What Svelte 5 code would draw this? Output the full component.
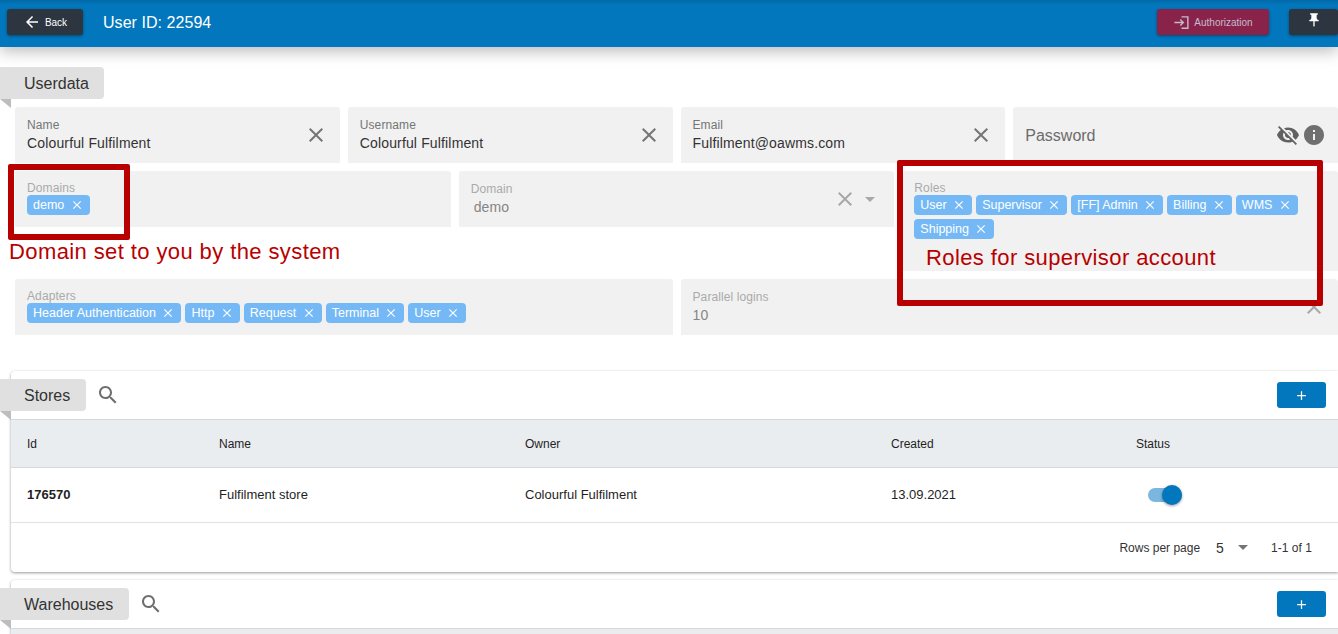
<script>
  const close = 'M19 6.41L17.59 5 12 10.59 6.41 5 5 6.41 10.59 12 5 17.59 6.41 19 12 13.41 17.59 19 19 17.59 13.41 12z';
  const search = 'M15.5 14h-.79l-.28-.27C15.41 12.59 16 11.11 16 9.5 16 5.91 13.09 3 9.5 3S3 5.91 3 9.5 5.91 16 9.5 16c1.61 0 3.09-.59 4.23-1.57l.27.28v.79l5 4.99L20.49 19l-4.99-5zm-6 0C7.01 14 5 11.99 5 9.5S7.01 5 9.5 5 14 7.01 14 9.5 11.99 14 9.5 14z';
  const add = 'M19 13h-6v6h-2v-6H5v-2h6V5h2v6h6v2z';
  const topFields = [
    { label: 'Name', value: 'Colourful Fulfilment' },
    { label: 'Username', value: 'Colourful Fulfilment' },
    { label: 'Email', value: 'Fulfilment@oawms.com' }
  ];
  const roles = ['User', 'Supervisor', '[FF] Admin', 'Billing', 'WMS', 'Shipping'];
  const adapters = ['Header Authentication', 'Http', 'Request', 'Terminal', 'User'];
</script>

{#snippet icon(d, cls)}
  <svg class={cls} viewBox="0 0 24 24" aria-hidden="true"><path d={d} /></svg>
{/snippet}

{#snippet tag(text)}
  <div class="tag">{text}<span class="fold"></span></div>
{/snippet}

{#snippet chips(items)}
  <div class="chips">
    {#each items as c}
      <span class="chip">{c}{@render icon(close, 'chip-x')}</span>
    {/each}
  </div>
{/snippet}

<div class="page">
  <header class="bar">
    <button class="btn dark back">
      {@render icon('M20 11H7.83l5.59-5.59L12 4l-8 8 8 8 1.41-1.41L7.83 13H20v-2z', 'back-ico')}
      Back
    </button>
    <h1>User ID: 22594</h1>
    <span class="spacer"></span>
    <button class="btn auth">
      {@render icon('M11 7L9.6 8.4l2.6 2.6H2v2h10.2l-2.6 2.6L11 17l5-5-5-5zm9 12h-8v2h8V5h-8V3h10v18h-2z', 'auth-ico')}
      Authorization
    </button>
    <button class="btn dark pin">
      {@render icon('M16 9V4h1c.55 0 1-.45 1-1s-.45-1-1-1H7c-.55 0-1 .45-1 1s.45 1 1 1h1v5c0 1.66-1.34 3-3 3v2h5.97v7l1 1 1-1v-7H19v-2c-1.66 0-3-1.34-3-3z', 'pin-ico')}
    </button>
  </header>

  <section class="userdata">
    {@render tag('Userdata')}
    <div class="rows">
      <div class="row">
        {#each topFields as f}
          <div class="field">
            <div class="text">
              <span class="label">{f.label}</span>
              <span class="value">{f.value}</span>
            </div>
            {@render icon(close, 'clear')}
          </div>
        {/each}
        <div class="field">
          <span class="placeholder">Password</span>
          <div class="pw-icons">
            {@render icon('M12 7c2.76 0 5 2.24 5 5 0 .65-.13 1.26-.36 1.83l2.92 2.92c1.51-1.26 2.7-2.89 3.43-4.75-1.73-4.39-6-7.5-11-7.5-1.4 0-2.74.25-3.98.7l2.16 2.16C10.74 7.13 11.35 7 12 7zM2 4.27l2.28 2.28.46.46C3.08 8.3 1.78 10.02 1 12c1.73 4.39 6 7.5 11 7.5 1.55 0 3.03-.3 4.38-.84l.42.42L19.73 22 21 20.73 3.27 3 2 4.27zM7.53 9.8l1.55 1.55c-.05.21-.08.43-.08.65 0 1.66 1.34 3 3 3 .22 0 .44-.03.65-.08l1.55 1.55c-.67.33-1.41.53-2.2.53-2.76 0-5-2.24-5-5 0-.79.2-1.53.53-2.2zm4.31-.78l3.15 3.15.02-.16c0-1.66-1.34-3-3-3l-.17.01z', 'eye')}
            {@render icon('M12 2C6.48 2 2 6.48 2 12s4.48 10 10 10 10-4.48 10-10S17.52 2 12 2zm1 15h-2v-6h2v6zm0-8h-2V7h2v2z', 'info')}
          </div>
        </div>
      </div>

      <div class="row top">
        <div class="field multi">
          <span class="label dim">Domains</span>
          {@render chips(['demo'])}
        </div>
        <div class="field">
          <div class="text">
            <span class="label dim">Domain</span>
            <span class="value dim-value">demo</span>
          </div>
          {@render icon(close, 'clear light')}
          <span class="caret domain-caret"></span>
        </div>
        <div class="field multi roles">
          <span class="label dim">Roles</span>
          {@render chips(roles)}
        </div>
      </div>

      <div class="row adapters-row">
        <div class="field multi">
          <span class="label dim">Adapters</span>
          {@render chips(adapters)}
        </div>
        <div class="field">
          <div class="text">
            <span class="label dim">Parallel logins</span>
            <span class="value dim-value flush">10</span>
          </div>
          {@render icon(close, 'clear light')}
        </div>
      </div>
    </div>
  </section>

  <section class="card stores">
    <div class="toolbar">
      {@render tag('Stores')}
      {@render icon(search, 'search')}
      <span class="spacer"></span>
      <button class="plus">{@render icon(add, 'plus-ico')}</button>
    </div>
    <div class="thead grid">
      <span>Id</span><span>Name</span><span>Owner</span><span>Created</span><span>Status</span>
    </div>
    <div class="tbody grid">
      <strong>176570</strong>
      <span>Fulfilment store</span>
      <span>Colourful Fulfilment</span>
      <span>13.09.2021</span>
      <span class="switch"><i></i><b></b></span>
    </div>
    <div class="pager">
      <span>Rows per page</span>
      <span class="per">5</span>
      <span class="caret dark-caret"></span>
      <span class="count">1-1 of 1</span>
    </div>
  </section>

  <section class="card warehouses">
    <div class="toolbar">
      {@render tag('Warehouses')}
      {@render icon(search, 'search')}
      <span class="spacer"></span>
      <button class="plus">{@render icon(add, 'plus-ico')}</button>
    </div>
    <div class="thead"></div>
  </section>

  <div class="note box-a"></div>
  <div class="note box-b"></div>
  <div class="note text-a">Domain set to you by the system</div>
  <div class="note text-b">Roles for supervisor account</div>
</div>

<style>
  :global(body) { margin: 0; background: #fff; }
  .page {
    position: relative;
    width: 1338px;
    height: 634px;
    overflow: hidden;
    background: #fff;
    color: #212121;
    font-family: "Liberation Sans", Arial, sans-serif;
    font-size: 13px;
  }
  svg { display: block; fill: currentColor; flex: none; }
  .spacer { flex: 1; }

  .bar {
    height: 47px;
    box-sizing: border-box;
    display: flex;
    align-items: center;
    padding: 0 0 3px 7px;
    background: linear-gradient(#0269a6 0, #0277bd 5px);
    box-shadow: 0 4px 16px rgba(0, 0, 0, .28);
    color: #fff;
    position: relative;
  }
  .bar h1 { margin: 1px 0 0 20px; font-size: 16px; font-weight: 400; letter-spacing: .05px; }
  .btn {
    height: 26px;
    border: 0;
    border-radius: 3px;
    display: flex;
    align-items: center;
    justify-content: center;
    color: #fff;
    font: 400 10px "Liberation Sans", Arial, sans-serif;
    box-shadow: 0 1px 3px rgba(0, 0, 0, .4);
    padding: 0;
  }
  .dark { background: #2d3640; }
  .back { width: 76px; gap: 4px; }
  .back-ico { width: 18px; height: 18px; }
  .auth { width: 112px; gap: 4px; background: #8a2349; color: #c3bcd0; margin-right: 20px; }
  .auth-ico { width: 17px; height: 17px; }
  .pin { width: 49px; }
  .pin-ico { width: 16px; height: 16px; transform: translateY(-2px); }

  .userdata { margin-top: 20px; }
  .tag {
    position: relative;
    width: fit-content;
    height: 32px;
    box-sizing: border-box;
    padding: 1px 15.5px 0 24px;
    display: flex;
    align-items: center;
    background: #e0e0e0;
    border-radius: 0 4px 4px 0;
    color: #333;
    font-size: 16px;
    white-space: nowrap;
  }
  .fold {
    position: absolute;
    left: 0;
    top: 32px;
    width: 0;
    height: 0;
    border-top: 9px solid #bdbdbd;
    border-left: 11px solid transparent;
  }
  .rows { display: flex; flex-direction: column; gap: 8px; margin: 8px 0 0 15px; }
  .row { display: flex; gap: 8px; }
  .row.top { align-items: flex-start; }
  .field {
    flex: 1 1 0;
    min-width: 0;
    height: 56px;
    box-sizing: border-box;
    background: #f1f1f1;
    border-radius: 3px 3px 0 0;
    padding: 0 12px;
    display: flex;
    align-items: center;
    position: relative;
  }
  .text { flex: 1; display: flex; flex-direction: column; }
  .label { display: block; font-size: 12px; line-height: 14px; color: #757575; letter-spacing: .1px; }
  .label.dim { color: #aaa; }
  .value { font-size: 14px; line-height: 20px; margin-top: 1px; color: #333; letter-spacing: .15px; }
  .dim-value { color: #858585; padding-left: 3px; }
  .flush { padding-left: 0; }
  .clear { width: 24px; height: 24px; color: #757575; }
  .clear.light { color: #a8a8a8; }
  .placeholder { flex: 1; font-size: 16px; color: #6b6b6b; padding-top: 1px; }
  .pw-icons { display: flex; align-items: center; gap: 2px; }
  .eye { width: 24px; height: 24px; color: #616161; }
  .info { width: 24px; height: 24px; color: #6f6f6f; }
  .multi { display: block; padding-top: 11px; }
  .multi .label { line-height: 13px; }
  .roles { height: 100px; }
  .chips { display: flex; flex-wrap: wrap; gap: 4px; }
  .chip {
    height: 20px;
    box-sizing: border-box;
    padding: 0 6px;
    display: inline-flex;
    align-items: center;
    gap: 5.4px;
    background: #74b9f5;
    border-radius: 4px;
    color: #fff;
    font-size: 12.5px;
    white-space: nowrap;
  }
  .chip-x { width: 14px; height: 14px; }
  .caret {
    width: 0;
    height: 0;
    border-left: 5px solid transparent;
    border-right: 5px solid transparent;
    border-top: 5px solid #a8a8a8;
    margin-left: 8px;
  }
  .domain-caret { margin-right: 7px; }

  .card {
    margin-left: 11px;
    background: #fff;
    border-radius: 4px 0 0 4px;
    box-shadow: 0 1px 3px rgba(0, 0, 0, .4);
  }
  .stores { margin-top: 36px; }
  .warehouses { margin-top: 8px; }
  .toolbar {
    height: 48px;
    box-sizing: border-box;
    display: flex;
    align-items: center;
    padding: 0 12px 0 0;
    margin-left: -11px;
  }
  .search { width: 24px; height: 24px; color: #6e6e6e; margin-left: 10px; }
  .plus {
    width: 49px;
    height: 26px;
    border: 0;
    border-radius: 3px;
    background: #0277bd;
    color: #fff;
    padding: 0;
    display: flex;
    align-items: center;
    justify-content: center;
  }
  .plus-ico { width: 15px; height: 15px; }
  .grid {
    display: grid;
    grid-template-columns: 192px 306px 366px 245px 1fr;
    padding-left: 16px;
    align-items: center;
    font-size: 13px;
    color: #1f1f1f;
  }
  .thead {
    height: 49px;
    box-sizing: border-box;
    background: #eaedf0;
    border-top: 1px solid #d6d8db;
    border-bottom: 1px solid #d6d8db;
    font-size: 12px;
  }
  .tbody { height: 55px; box-sizing: border-box; border-bottom: 1px solid #e2e2e2; padding-bottom: 1px; }
  .tbody strong { font-weight: 700; }
  .switch { position: relative; display: block; width: 36px; height: 20px; margin-left: 12px; }
  .switch i { position: absolute; left: 0; top: 3px; width: 34px; height: 14px; border-radius: 7px; background: #7ab6de; }
  .switch b {
    position: absolute;
    left: 14px;
    top: 0;
    width: 20px;
    height: 20px;
    border-radius: 50%;
    background: #0277bd;
    box-shadow: 0 1px 3px rgba(0, 0, 0, .4);
  }
  .pager {
    height: 49px;
    display: flex;
    align-items: center;
    justify-content: flex-end;
    padding-right: 26px;
    font-size: 12px;
    color: #333;
  }
  .per { margin-left: 16px; font-size: 14px; }
  .dark-caret { border-top-color: #757575; margin-left: 14px; }
  .count { margin-left: 23px; letter-spacing: .05px; }

  .note { position: absolute; box-sizing: border-box; }
  .box-a, .box-b { border: 6px solid #b80000; border-radius: 2px; }
  .box-a { left: 8px; top: 164px; width: 122px; height: 76px; }
  .box-b { left: 897px; top: 160px; width: 426px; height: 146px; }
  .text-a, .text-b {
    font-family: "Liberation Sans", Arial, sans-serif;
    font-size: 22px;
    line-height: 26px;
    color: #b80000;
    letter-spacing: .4px;
    white-space: nowrap;
  }
  .text-a { left: 9px; top: 239px; }
  .text-b { left: 926px; top: 245px; }
</style>
